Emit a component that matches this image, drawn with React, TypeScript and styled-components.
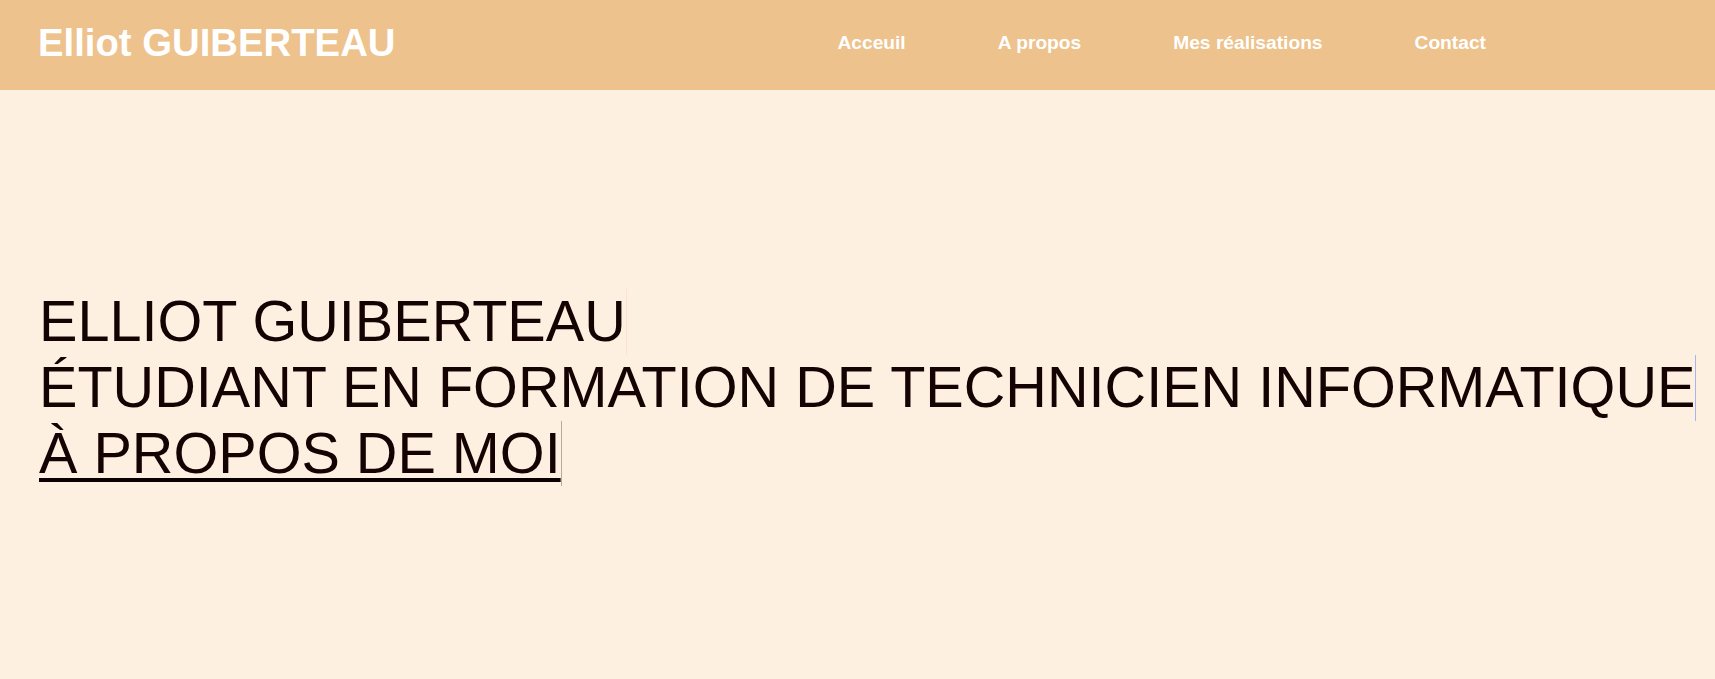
import React from "react";
import styled, { createGlobalStyle } from "styled-components";

const GlobalStyle = createGlobalStyle`
  html, body {
    margin: 0;
    padding: 0;
    background: #fef0e0;
    font-family: "Liberation Sans", Arial, sans-serif;
  }
  * { box-sizing: border-box; }
`;

const Header = styled.header`
  height: 90px;
  background: #edc28d;
  display: flex;
  align-items: center;
  padding: 0 0 5px 38px;
`;

const Logo = styled.h1`
  margin: 0;
  font-size: 38.3px;
  font-weight: 700;
  color: #ffffff;
  white-space: nowrap;
`;

const Nav = styled.nav`
  display: flex;
  gap: 92px;
  margin-left: 442px;
`;

const NavLink = styled.a`
  font-size: 19.2px;
  font-weight: 700;
  color: #ffffff;
  text-decoration: none;
  white-space: nowrap;
`;

const Hero = styled.main`
  padding: 199px 0 0 39px;
  min-height: calc(100vh - 90px);
`;

const Line = styled.div<{ $caret: string; $underline?: boolean }>`
  width: fit-content;
  font-size: 57.6px;
  line-height: 65.8px;
  color: #150303;
  white-space: nowrap;
  border-right: 1px solid ${(p) => p.$caret};
  text-decoration: ${(p) => (p.$underline ? "underline" : "none")};
  text-decoration-thickness: 4px;
  text-underline-offset: 5px;
  text-decoration-color: #0a0000;
`;

export default function App() {
  return (
    <>
      <GlobalStyle />
      <Header>
        <Logo>Elliot GUIBERTEAU</Logo>
        <Nav>
          <NavLink href="#">Acceuil</NavLink>
          <NavLink href="#">A propos</NavLink>
          <NavLink href="#">Mes réalisations</NavLink>
          <NavLink href="#">Contact</NavLink>
        </Nav>
      </Header>
      <Hero>
        <Line $caret="#fbe3d3">ELLIOT GUIBERTEAU</Line>
        <Line $caret="#a8b4f0">ÉTUDIANT EN FORMATION DE TECHNICIEN INFORMATIQUE</Line>
        <Line $caret="#b8aaa0" $underline>
          À PROPOS DE MOI
        </Line>
      </Hero>
    </>
  );
}
